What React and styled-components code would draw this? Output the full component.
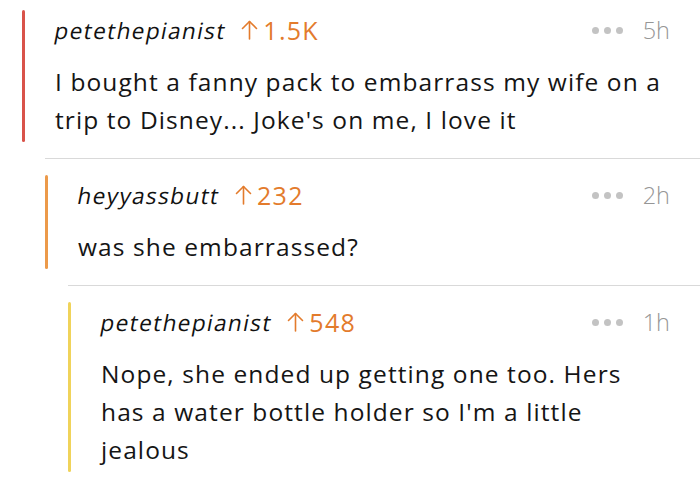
import styled, { createGlobalStyle } from "styled-components";

const GlobalStyle = createGlobalStyle`
  html, body {
    margin: 0;
    padding: 0;
    background: #ffffff;
  }
  body {
    font-family: "Open Sans", "Noto Sans", sans-serif;
    color: #1a1a1a;
  }
`;

const Thread = styled.div`
  width: 700px;
  padding-top: 10px;
  overflow: hidden;
`;

const Block = styled.div`
  margin-left: ${(p) => (p.$depth > 0 ? "23px" : "22px")};
  ${(p) => p.$depth > 0 && "border-top: 1px solid #d9d9d9;"}
  padding-top: ${(p) => (p.$depth > 0 ? "16px" : "0")};
`;

const Row = styled.div`
  display: flex;
  padding-bottom: 16px;
`;

const Bar = styled.div`
  width: 3px;
  flex: none;
  border-radius: 2px;
  background: ${(p) => p.$color};
`;

const Content = styled.div`
  flex: 1;
  padding: 0 30px 3px 30px;
`;

const Header = styled.div`
  display: flex;
  align-items: center;
  height: 40px;
`;

const User = styled.span`
  display: inline-block;
  transform: skewX(-11deg);
  font-size: 22.5px;
  letter-spacing: 1.4px;
  color: #111;
`;

const Score = styled.span`
  display: flex;
  align-items: center;
  gap: 5px;
  margin-left: 15px;
  color: #e37b2c;
  font-size: 25px;
  letter-spacing: 1.3px;
`;

const Meta = styled.div`
  margin-left: auto;
  display: flex;
  align-items: center;
  gap: 20px;
  color: #969696;
  font-size: 23.5px;
  font-weight: 300;
`;

const Dots = styled.div`
  display: flex;
  gap: 5px;
  span {
    width: 7px;
    height: 7px;
    border-radius: 50%;
    background: #c3c3c3;
  }
`;

const Body = styled.p`
  margin: 13px 6px 0 0;
  font-size: 24.5px;
  letter-spacing: 1.1px;
  line-height: 38px;
  color: #151515;
`;

const UpArrow = () => (
  <svg width="17" height="20" viewBox="0 0 17 20" fill="none" stroke="#e37b2c" strokeWidth="1.6" strokeLinecap="round" strokeLinejoin="round">
    <path d="M8.5 19V1.5" />
    <path d="M1.5 8.5l7-7 7 7" />
  </svg>
);

function Comment({ depth, color, user, score, age, text, children }) {
  return (
    <Block $depth={depth}>
      <Row>
        <Bar $color={color} />
        <Content>
          <Header>
            <User>{user}</User>
            <Score>
              <UpArrow />
              {score}
            </Score>
            <Meta>
              <Dots>
                <span />
                <span />
                <span />
              </Dots>
              {age}
            </Meta>
          </Header>
          <Body>{text}</Body>
        </Content>
      </Row>
      {children}
    </Block>
  );
}

export default function App() {
  return (
    <>
      <GlobalStyle />
      <Thread>
        <Comment
          depth={0}
          color="#d9534a"
          user="petethepianist"
          score="1.5K"
          age="5h"
          text="I bought a fanny pack to embarrass my wife on a trip to Disney... Joke's on me, I love it"
        >
          <Comment
            depth={1}
            color="#ec9a4a"
            user="heyyassbutt"
            score="232"
            age="2h"
            text="was she embarrassed?"
          >
            <Comment
              depth={2}
              color="#f0d35a"
              user="petethepianist"
              score="548"
              age="1h"
              text="Nope, she ended up getting one too. Hers has a water bottle holder so I'm a little jealous"
            />
          </Comment>
        </Comment>
      </Thread>
    </>
  );
}
